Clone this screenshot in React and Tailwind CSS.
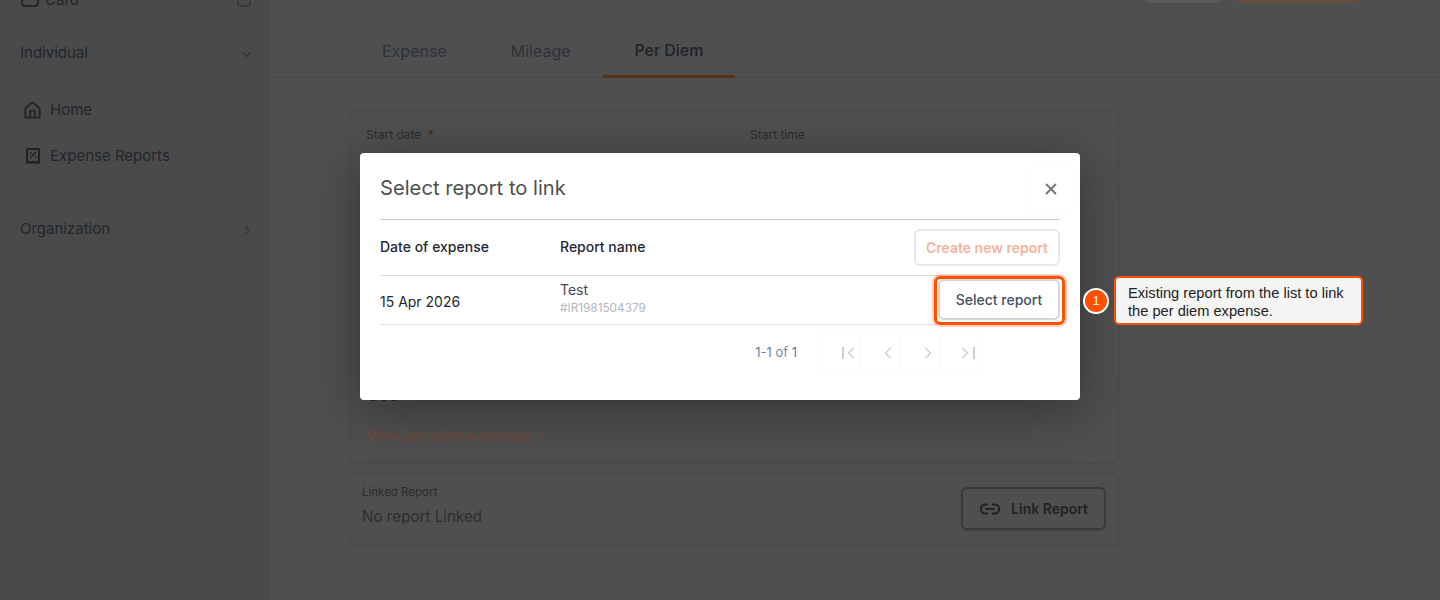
import React from "react";
import { Home, ChevronDown, ChevronRight, ChevronLeft, X, Link2 } from "lucide-react";

const font = { fontFamily: "Inter, sans-serif" };

function Receipt() {
  return (
    <svg width="16" height="18" viewBox="0 0 16 18" fill="none" stroke="#1c2028" strokeWidth="1.9" strokeLinejoin="round" strokeLinecap="round">
      <path d="M2 2h12v14l-2-1.4-2 1.4-2-1.4-2 1.4-2-1.4-2 1.4z" />
      <path d="M5.5 10.5l5-5" strokeWidth="1.3" />
      <path d="M5.6 6h.1M10.4 10h.1" strokeWidth="1.8" />
    </svg>
  );
}

function PageBtn({ children }) {
  return (
    <div className="w-10 h-10 rounded-lg flex items-center justify-center pl-4 shadow-[0_0_3px_rgba(0,0,0,0.04)] text-[#cdd0d5]">
      {children}
    </div>
  );
}

function Sidebar() {
  return (
    <aside className="w-[270px] shrink-0 h-[600px] overflow-hidden bg-[#4a4a4a] text-[#22262d]">
      <div className="flex items-center justify-between pl-[20px] pr-[19px] -mt-[9px] h-[18px]">
        <div className="flex items-center gap-[6px] pl-[1px]">
          <div className="w-[18px] h-[14px] rounded-sm border-2 border-[#22262d]" />
          <span className="text-[15px]">Card</span>
        </div>
        <div className="w-[14px] h-[14px] rounded-sm border-2 border-[#3a3a3a]" />
      </div>
      <div className="flex items-center justify-between pl-[20px] pr-[16px] mt-[35px] h-[18px]">
        <span className="text-[15px]">Individual</span>
        <ChevronDown size={15} className="text-[#363636] mt-[3px]" strokeWidth={2.4} />
      </div>
      <div className="mt-[38px] pl-[23px] flex items-center gap-[8px] h-[20px]">
        <Home size={19} strokeWidth={2.5} />
        <span className="text-[15px]">Home</span>
      </div>
      <div className="mt-[26px] pl-[25px] flex items-center gap-[9px] h-[20px]">
        <Receipt />
        <span className="text-[15px]">Expense Reports</span>
      </div>
      <div className="flex items-center justify-between pl-[20px] pr-[15px] mt-[53px] h-[20px]">
        <span className="text-[15px]">Organization</span>
        <ChevronRight size={15} className="text-[#363636] mt-[3px]" strokeWidth={2.4} />
      </div>
    </aside>
  );
}

function Tab({ children, active }) {
  return active ? (
    <div className="px-[32px] h-[53px] flex items-center pt-[2px] text-[15.9px] text-[#1e2228] font-medium border-b-[3px] border-[#55321c]">{children}</div>
  ) : (
    <div className="px-[32px] h-[53px] flex items-center pt-[1px] text-[16px] text-[#2e323b] border-b-[3px] border-transparent">{children}</div>
  );
}

function Main() {
  return (
    <main className="flex-1 h-[600px] overflow-hidden bg-[#4f4f4f] border-l border-[#4c4c4c]">
      <div className="flex justify-end gap-[12px] pr-[80px] -mt-[30px] h-[33px]">
        <div className="w-[77px] h-[33px] rounded-md bg-[#5a5a5a]" />
        <div className="w-[126px] h-[33px] rounded-md bg-[#664c3e]" />
      </div>
      <div className="flex h-[75px] items-end border-b border-[#474747] pl-[79px]">
        <div className="flex -mb-px">
          <Tab>Expense</Tab>
          <Tab>Mileage</Tab>
          <Tab active>Per Diem</Tab>
        </div>
      </div>
      <div className="ml-[78px] mr-[321px] mt-[32px] h-[353px] rounded-md border border-[#494949] pt-[15px] pl-[16px] shadow-[0_1px_2px_rgba(0,0,0,0.05)]">
        <div className="grid grid-cols-[384px_1fr] text-[12px] text-[#2a2d34]">
          <div>Start date <span className="text-[#3a2626] ml-[3px]">*</span></div>
          <div>Start time</div>
        </div>
        <div className="mt-[241px] h-[20px] pl-[2px] text-[16px] leading-[20px] text-[#222] font-semibold">000</div>
        <div className="mt-[20px] text-[14px] font-semibold text-[#6a4a3b] flex items-center gap-[5px]">
          View per diem summary <ChevronDown size={14} strokeWidth={2.4} />
        </div>
      </div>
      <div className="ml-[78px] mr-[321px] mt-[9px] h-[74px] rounded-md border border-[#494949] pl-[12px] pr-[12px] flex items-center justify-between shadow-[0_1px_2px_rgba(0,0,0,0.05)]">
        <div className="-mt-[7px]">
          <div className="text-[11.5px] text-[#2d2d2d] leading-[16px]">Linked Report</div>
          <div className="text-[15.2px] text-[#2e2e2e] leading-[22px] mt-[6px]">No report Linked</div>
        </div>
        <div className="w-[145px] h-[43px] -mt-[1px] rounded-md border-2 border-[#3a3a3a] flex items-center justify-center gap-[10px] text-[14px] font-semibold text-[#1f2227] shadow-[0_1px_2px_rgba(0,0,0,0.15)]">
          <Link2 size={22} strokeWidth={2.2} />
          Link Report
        </div>
      </div>
    </main>
  );
}

function Modal() {
  return (
    <div className="absolute left-[360px] top-[153px] w-[720px] h-[247px] bg-white rounded-[4px] px-[20px] shadow-[0_10px_50px_rgba(0,0,0,0.35)]">
      <div className="h-[67px] border-b border-[#c9c9c9] flex items-center justify-between">
        <span className="text-[20.2px] text-[#4f4f4f] font-normal mt-[4px]">Select report to link</span>
        <div className="w-[50px] h-[42px] -mr-[16px] mt-[6px] rounded-lg flex items-center justify-center shadow-[0_0_3px_rgba(0,0,0,0.04)]">
          <X size={18} className="text-[#6f7378]" strokeWidth={2.4} />
        </div>
      </div>
      <div className="h-[56px] border-b border-[#dcdcdc] flex items-center text-[14px] text-[#1f2733] font-medium">
        <div className="w-[180px] -mt-[3px]">Date of expense</div>
        <div className="flex-1 -mt-[3px]">Report name</div>
        <div className="w-[146px] h-[37px] rounded-md border-2 border-[#e6e8ee] flex items-center justify-center text-[#f7b29c] font-semibold">Create new report</div>
      </div>
      <div className="h-[49px] border-b border-[#e2e2e2] flex items-center text-[14px]">
        <div className="w-[180px] text-[#1f2733] mt-[2px]">15 Apr 2026</div>
        <div className="flex-1">
          <div className="text-[#4b4453] leading-[18px] -mt-[3px]">Test</div>
          <div className="text-[11.8px] text-[#b3b7c0] leading-[16px] mt-[1px]">#IR1981504379</div>
        </div>
        <div className="w-[122px] h-[41px] rounded-md border-2 border-[#d4d6da] flex items-center justify-center text-[#45505f] font-medium -mt-[2px]">Select report</div>
      </div>
      <div className="flex items-center justify-end h-[55px] pr-[80px]">
        <span className="text-[13px] text-[#7c8797] mr-[23px]"><span className="text-[#5f7fb0]">1-1</span> of <span className="text-[#5f7fb0]">1</span></span>
        <PageBtn><span className="flex items-center ml-[7px]"><span className="w-[2px] h-[12px] bg-[#cdd0d5]" /><ChevronLeft size={20} strokeWidth={1.8} className="-ml-[3px]" /></span></PageBtn>
        <PageBtn><ChevronLeft size={20} strokeWidth={1.8} /></PageBtn>
        <PageBtn><ChevronRight size={20} strokeWidth={1.8} /></PageBtn>
        <PageBtn><span className="flex items-center mr-[6px]"><ChevronRight size={20} strokeWidth={1.8} className="-mr-[2px]" /><span className="w-[2px] h-[12px] bg-[#cdd0d5]" /></span></PageBtn>
      </div>
    </div>
  );
}

function Annotation() {
  return (
    <>
      <div className="absolute left-[934px] top-[276px] w-[131px] h-[49px] rounded-[6px] border-[3px] border-[#ff5000] shadow-[0_0_0_2px_rgba(255,80,0,0.25)]" />
      <div className="absolute left-[1083px] top-[288px] w-[26px] h-[26px] rounded-full bg-[#ff5000] border-2 border-white text-white text-[12px] flex items-center justify-center" style={{ fontFamily: '"Liberation Sans", sans-serif' }}>1</div>
      <div className="absolute left-[1114px] top-[276px] w-[249px] h-[49px] rounded-[5px] bg-[#f5f5f5] border-2 border-[#ff5000] pl-[12px] pr-[8px] pt-[6px] text-[14.65px] leading-[18px] text-[#222]" style={{ fontFamily: '"Liberation Sans", sans-serif' }}>
        Existing report from the list to link the per diem expense.
      </div>
    </>
  );
}

export default function App() {
  return (
    <div className="relative w-[1440px] h-[600px] overflow-hidden flex" style={font}>
      <Sidebar />
      <Main />
      <Modal />
      <Annotation />
    </div>
  );
}
